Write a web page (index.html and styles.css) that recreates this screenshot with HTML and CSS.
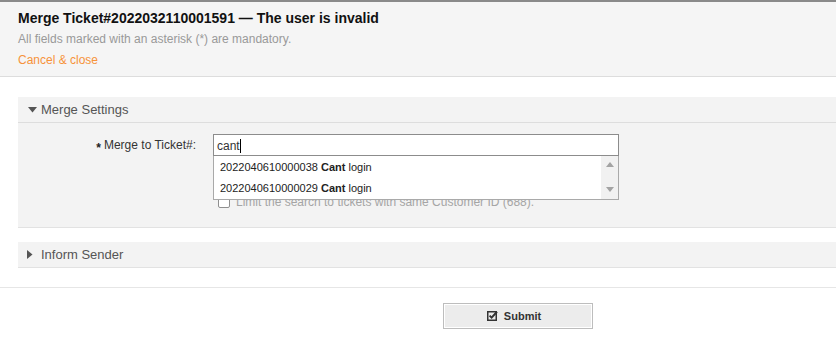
FILE: index.html
```html
<!DOCTYPE html>
<html>
<head>
<meta charset="utf-8">
<link rel="stylesheet" href="styles.css">
</head>
<body>
<div class="header">
  <h1 class="title">Merge Ticket#2022032110001591 — The user is invalid</h1>
  <p class="hint">All fields marked with an asterisk (*) are mandatory.</p>
  <a class="cancel" href="#">Cancel &amp; close</a>
</div>

<div class="widget">
  <div class="widget-head">
    <svg class="tri" width="9" height="6" viewBox="0 0 9 6"><path d="M0 0H9L4.5 5.5Z" fill="#555"/></svg>
    <span>Merge Settings</span>
  </div>
  <div class="widget-body">
    <div class="field">
      <label class="label"><span class="req">*</span>Merge to Ticket#:</label>
      <div class="control">
        <div class="input">cant<span class="caret"></span></div>
        <div class="dropdown">
          <div class="items">
            <div class="item">2022040610000038 <b>Cant</b> login</div>
            <div class="item">2022040610000029 <b>Cant</b> login</div>
          </div>
          <div class="scroll">
            <svg width="8" height="5" viewBox="0 0 8 5"><path d="M0 5H8L4 0Z" fill="#a3a3a3"/></svg>
            <svg width="8" height="5" viewBox="0 0 8 5"><path d="M0 0H8L4 5Z" fill="#a3a3a3"/></svg>
          </div>
        </div>
      </div>
    </div>
    <div class="check-row">
      <span class="box"></span>
      <span class="check-text">Limit the search to tickets with same Customer ID (688).</span>
    </div>
  </div>
</div>

<div class="widget collapsed">
  <div class="widget-head">
    <svg class="tri-r" width="6" height="9" viewBox="0 0 6 9"><path d="M0 0V9L5.5 4.5Z" fill="#555"/></svg>
    <span>Inform Sender</span>
  </div>
</div>

<div class="footer">
  <button class="submit" type="button">
    <svg width="11" height="11" viewBox="0 0 11 11"><rect x="0.75" y="1.75" width="8.5" height="8.5" fill="none" stroke="#333" stroke-width="1.5"/><path d="M2.6 5.6L4.6 7.6L10 1.8" fill="none" stroke="#333" stroke-width="2"/></svg>
    <span>Submit</span>
  </button>
</div>
</body>
</html>
```
FILE: styles.css
```css
body {
  margin: 0;
  font-family: "Liberation Sans", Arial, sans-serif;
  background: #fff;
  color: #333;
}
.header {
  background: #f5f5f5;
  border-top: 2px solid #8a8a8a;
  border-bottom: 1px solid #dddddd;
  padding: 6px 18px 5px;
}
.title {
  margin: 0;
  font-size: 14px;
  line-height: 21px;
  font-weight: bold;
  color: #111;
}
.hint {
  margin: 0;
  font-size: 12px;
  line-height: 21px;
  color: #999;
}
.cancel {
  display: block;
  font-size: 12px;
  line-height: 21px;
  color: #f7933a;
  text-decoration: none;
}
.widget {
  margin: 20px 0 0 18px;
  background: #f3f3f3;
  border-bottom: 1px solid #e2e2e2;
}
.widget.collapsed {
  margin-top: 14px;
}
.widget-head {
  height: 25px;
  display: flex;
  align-items: center;
  padding-left: 10px;
  font-size: 13px;
  color: #555;
}
.widget-body {
  border-top: 1px solid #dddddd;
  padding: 11px 0 17px;
}
.tri {
  margin-right: 4px;
  margin-top: 1px;
}
.tri-r {
  margin-right: 8px;
  margin-left: -1px;
}
.field {
  display: flex;
  align-items: center;
  height: 22px;
}
.label {
  width: 178px;
  text-align: right;
  font-size: 12px;
  color: #333;
  margin-right: 17px;
  padding-top: 2px;
}
.req {
  font-weight: bold;
  font-size: 12px;
  margin-right: 3px;
  color: #222;
  vertical-align: -3px;
}
.control {
  position: relative;
}
.input {
  box-sizing: border-box;
  width: 406px;
  height: 22px;
  border: 1px solid #8c8c8c;
  background: #fff;
  font-size: 12px;
  line-height: 20px;
  padding: 1px 0 0 3px;
  color: #333;
}
.caret {
  display: inline-block;
  width: 1px;
  height: 14px;
  background: #000;
  vertical-align: -3px;
}
.dropdown {
  position: absolute;
  left: 0;
  top: 22px;
  box-sizing: border-box;
  width: 406px;
  height: 44px;
  background: #fff;
  border: 1px solid #a9a9a9;
  border-top: none;
  display: flex;
  z-index: 2;
}
.items {
  flex: 1;
  padding-top: 1px;
}
.item {
  height: 21px;
  line-height: 21px;
  font-size: 11px;
  color: #222;
  padding-left: 6px;
}
.scroll {
  width: 17px;
  background: #f1f1f1;
  display: flex;
  flex-direction: column;
  align-items: center;
  justify-content: space-between;
  padding: 6px 0 7px;
  box-sizing: border-box;
}
.check-row {
  display: flex;
  align-items: center;
  margin-top: 38px;
  margin-left: 200px;
  height: 16px;
}
.box {
  box-sizing: border-box;
  width: 12px;
  height: 12px;
  border: 1px solid #8f8f8f;
  border-radius: 2px;
  background: #fff;
  margin-right: 6px;
}
.check-text {
  font-size: 12px;
  color: #a5a5a5;
}
.footer {
  margin-top: 19px;
  border-top: 1px solid #e6e6e6;
  padding: 15px 0 0 443px;
}
.submit {
  box-sizing: border-box;
  width: 150px;
  height: 26px;
  background: #ececec;
  border: 1px solid #bdbdbd;
  box-shadow: inset 0 0 0 1px #fff;
  display: flex;
  align-items: center;
  justify-content: center;
  gap: 6px;
  font-family: "Liberation Sans", Arial, sans-serif;
  font-size: 11px;
  font-weight: bold;
  color: #333;
  padding: 0 8px 1px 0;
  cursor: pointer;
}
```
